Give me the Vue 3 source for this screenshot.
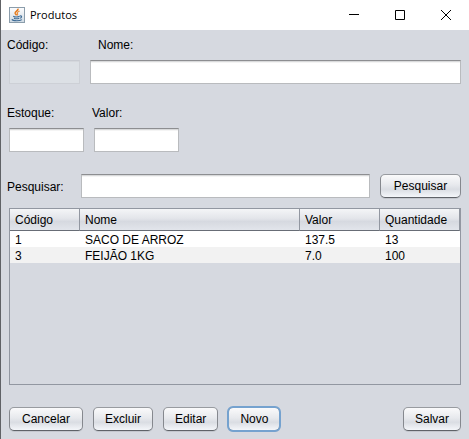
<script setup>
import { ref } from 'vue'

const codigo = ref('')
const nome = ref('')
const estoque = ref('')
const valor = ref('')
const busca = ref('')

const produtos = [
  { codigo: '1', nome: 'SACO DE ARROZ', valor: '137.5', quantidade: '13' },
  { codigo: '3', nome: 'FEIJÃO 1KG', valor: '7.0', quantidade: '100' },
]
</script>

<template>
  <div class="window">
    <header class="titlebar">
      <svg class="app-icon" width="16" height="16" viewBox="0 0 16 16" aria-hidden="true">
        <defs>
          <linearGradient id="tile" x1="0" y1="0" x2="0" y2="1">
            <stop offset="0" stop-color="#fdfdfe" />
            <stop offset="1" stop-color="#cfdae3" />
          </linearGradient>
        </defs>
        <rect x="0.5" y="0.5" width="15" height="15" fill="url(#tile)" stroke="#8b9dab" />
        <path d="M9 1.6C9.6 3.8 5.8 4.4 6.2 6.2C6.4 7 7.3 7.5 7.5 8.4" fill="none" stroke="#e57a1c" stroke-width="1.6" />
        <path d="M10.6 4C8.8 4.8 7.9 5.6 8.5 6.6C8.9 7.3 8.7 7.8 8.2 8.4" fill="none" stroke="#ea8e3c" stroke-width="1.2" />
        <path d="M4.2 9.2C5.6 10 9 9.9 10.6 9.2M5 11.2C6.4 11.8 8.8 11.8 10 11.2M10.8 9C13.4 8.4 13 11 10.6 11.3" fill="none" stroke="#3f6c96" stroke-width="1.1" />
        <path d="M2.8 12.4C4 14.2 10.8 14.2 12.8 12.6" fill="none" stroke="#3f6c96" stroke-width="1.1" />
      </svg>
      <h1 class="title">Produtos</h1>
      <div class="window-controls">
        <button type="button" aria-label="Minimizar">
          <svg width="10" height="10" viewBox="0 0 10 10"><path d="M0 4.5H10" /></svg>
        </button>
        <button type="button" aria-label="Maximizar">
          <svg width="10" height="10" viewBox="0 0 10 10"><path d="M0.5 0.5H9.5V9.5H0.5Z" /></svg>
        </button>
        <button type="button" aria-label="Fechar">
          <svg width="10" height="10" viewBox="0 0 10 10"><path d="M0 0L10 10M10 0L0 10" /></svg>
        </button>
      </div>
    </header>

    <main class="content">
      <div class="fields">
        <div class="field codigo">
          <label for="codigo">Código:</label>
          <input id="codigo" v-model="codigo" type="text" disabled />
        </div>
        <div class="field nome">
          <label for="nome">Nome:</label>
          <input id="nome" v-model="nome" type="text" />
        </div>
      </div>

      <div class="fields">
        <div class="field estoque">
          <label for="estoque">Estoque:</label>
          <input id="estoque" v-model="estoque" type="text" />
        </div>
        <div class="field valor">
          <label for="valor">Valor:</label>
          <input id="valor" v-model="valor" type="text" />
        </div>
      </div>

      <div class="search">
        <label for="busca">Pesquisar:</label>
        <input id="busca" v-model="busca" type="text" />
        <button type="button" class="btn">Pesquisar</button>
      </div>

      <div class="table-pane">
        <table>
          <colgroup>
            <col class="col-codigo" />
            <col />
            <col class="col-num" />
            <col class="col-num" />
          </colgroup>
          <thead>
            <tr>
              <th scope="col">Código</th>
              <th scope="col">Nome</th>
              <th scope="col">Valor</th>
              <th scope="col">Quantidade</th>
            </tr>
          </thead>
          <tbody>
            <tr v-for="p in produtos" :key="p.codigo">
              <td>{{ p.codigo }}</td>
              <td>{{ p.nome }}</td>
              <td>{{ p.valor }}</td>
              <td>{{ p.quantidade }}</td>
            </tr>
          </tbody>
        </table>
      </div>

      <div class="actions">
        <button type="button" class="btn cancel">Cancelar</button>
        <button type="button" class="btn">Excluir</button>
        <button type="button" class="btn">Editar</button>
        <button type="button" class="btn focused">Novo</button>
        <button type="button" class="btn save">Salvar</button>
      </div>
    </main>
  </div>
</template>

<style>
body {
  background: #d6d9e0;
}
</style>

<style scoped>
.window {
  box-sizing: border-box;
  display: flex;
  flex-direction: column;
  min-height: 100vh;
  border-left: 1px solid #606266;
  background: #d6d9e0;
  color: #000;
  font: 12px/16px "Liberation Sans", Arial, sans-serif;
}

.titlebar {
  display: flex;
  align-items: center;
  height: 30px;
  padding-left: 8px;
  background: #fff;
}

.title {
  flex: 1;
  margin: 0 0 0 5px;
  font: 11px/16px "Open Sans", "Segoe UI", sans-serif;
}

.window-controls {
  display: flex;
}

.window-controls button {
  display: flex;
  align-items: center;
  justify-content: center;
  width: 46px;
  height: 30px;
  padding: 0;
  border: 0;
  background: transparent;
}

.window-controls svg {
  display: block;
}

.window-controls path {
  fill: none;
  stroke: #000;
}

.content {
  display: flex;
  flex: 1;
  flex-direction: column;
  padding: 7px 8px 8px;
}

.fields {
  display: flex;
  gap: 10px;
  margin-bottom: 21px;
}

.field {
  display: flex;
  flex-direction: column;
  gap: 7px;
}

label {
  margin-left: -2px;
}

.codigo {
  width: 71px;
}

.nome {
  flex: 1;
}

.nome label {
  margin-left: 8px;
}

.estoque {
  width: 75px;
}

.valor {
  width: 85px;
}

input {
  box-sizing: border-box;
  width: 100%;
  height: 24px;
  padding: 0 5px;
  border: 1px solid #b9bbbe;
  border-top-color: #8d8e91;
  border-radius: 0;
  background: #fff;
  box-shadow: inset 0 1px #d9dadb, inset 0 2px #f4f4f4;
  font: inherit;
}

input:disabled {
  border-color: #cdd0d6;
  border-top-color: #c7cad1;
  background: #dce0e5;
  box-shadow: inset 0 1px #d4d7dc;
}

.search {
  display: flex;
  align-items: center;
  margin-top: 1px;
}

.search label {
  width: 74px;
  padding-top: 1px;
}

.search input {
  flex: 1;
  width: auto;
  min-width: 0;
  margin-right: 10px;
}

.btn {
  height: 24px;
  padding: 0 11px;
  border: 1px solid #85888e;
  border-top-color: #989ba0;
  border-bottom-color: #5f6268;
  border-radius: 5px;
  background: linear-gradient(#fafafb, #e7e9ed 45%, #dadde3 65%, #f4f6fa);
  box-shadow: 0 1px #c3c6cd;
  color: #000;
  font: inherit;
}

.search .btn {
  width: 81px;
}

.btn.cancel {
  width: 74px;
}

.btn.focused {
  outline: 2px solid #75a2cf;
  outline-offset: -1px;
}

.table-pane {
  flex: 1;
  margin-top: 10px;
  border: 1px solid #9297a1;
}

table {
  width: 100%;
  border-collapse: separate;
  border-spacing: 0;
  table-layout: fixed;
}

.col-codigo {
  width: 70px;
}

.col-num {
  width: 80px;
}

th {
  box-sizing: border-box;
  height: 22px;
  padding: 0 5px;
  border-right: 1px solid #9297a1;
  border-bottom: 1px solid #686d76;
  background: linear-gradient(#f4f5f7, #e3e5ea 45%, #d6d9e0 60%, #e2e5eb);
  font-weight: 400;
  text-align: left;
}

td {
  padding: 2px 5px 0;
  background: #fff;
  line-height: 14px;
}

tbody tr:nth-child(even) td {
  background: #f2f2f2;
}

.actions {
  display: flex;
  gap: 10px;
  margin-top: 22px;
}

.save {
  margin-left: auto;
}
</style>
